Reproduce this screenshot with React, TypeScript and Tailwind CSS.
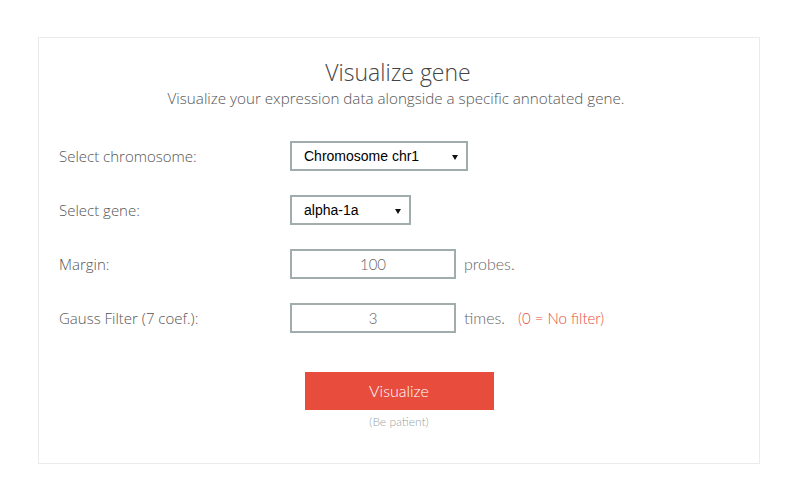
import React from 'react'

const labelCls = 'w-[231px] shrink-0 text-[15px] font-light text-[#555]'
const controlBorder = 'h-[30px] border-2 border-[#a1adad] bg-white'
const lato = { fontFamily: 'Lato, sans-serif' }

function Arrow() {
  return (
    <svg width="6" height="5" viewBox="0 0 6 5" className="absolute right-[8px] top-[12px]">
      <path d="M0 0 H6 L3 5 Z" fill="#111" />
    </svg>
  )
}

export default function App() {
  return (
    <div className="min-h-[502px] bg-white pt-[37px]" style={{ fontFamily: '"Open Sans", sans-serif' }}>
      <div className="ml-[38px] w-[722px] h-[427px] border border-[#ebebeb] px-[20px] pt-[20px]">
        <div className="text-center">
          <h1 className="text-[23px] font-light leading-[29px] text-[#444] pr-[2px]">Visualize gene</h1>
          <p className="text-[15.2px] font-light leading-[20px] text-[#555] mt-[1px] pr-[6px]">
            Visualize your expression data alongside a specific annotated gene.
          </p>
        </div>

        <div className="mt-[33px] flex flex-col gap-[24px]">
          <div className="flex items-center">
            <div className={labelCls}>Select chromosome:</div>
            <div className={`relative w-[178px] ${controlBorder}`}>
              <div className="pl-[12px] leading-[26px] text-[14px] text-black" style={{ fontFamily: '"Liberation Sans", Arial, sans-serif' }}>
                Chromosome chr1
              </div>
              <Arrow />
            </div>
          </div>

          <div className="flex items-center">
            <div className={labelCls}>Select gene:</div>
            <div className={`relative w-[121px] ${controlBorder}`}>
              <div className="pl-[12px] leading-[26px] text-[14px] text-black" style={{ fontFamily: '"Liberation Sans", Arial, sans-serif' }}>
                alpha-1a
              </div>
              <Arrow />
            </div>
          </div>

          <div className="flex items-center">
            <div className={labelCls}>Margin:</div>
            <div className={`w-[166px] ${controlBorder} text-center leading-[26px] text-[15px] font-light text-[#666]`} style={lato}>
              100
            </div>
            <span className="ml-[8px] text-[16px] font-light text-[#666]" style={lato}>
              probes.
            </span>
          </div>

          <div className="flex items-center">
            <div className={labelCls}>Gauss Filter (7 coef.):</div>
            <div className={`w-[166px] ${controlBorder} text-center leading-[26px] text-[15px] font-light text-[#666]`} style={lato}>
              3
            </div>
            <span className="ml-[8px] text-[16px] font-light text-[#666]" style={lato}>
              times.
            </span>
            <span className="ml-[13px] text-[15px] font-light text-[#e74c3c]" style={lato}>
              (0 = No filter)
            </span>
          </div>
        </div>

        <div className="mt-[39px] flex flex-col items-center" style={lato}>
          <button className="w-[189px] h-[38px] bg-[#e74c3c] text-white text-[16px] font-light">Visualize</button>
          <div className="mt-[3px] text-[12px] font-light text-[#95a5a6]">(Be patient)</div>
        </div>
      </div>
    </div>
  )
}
